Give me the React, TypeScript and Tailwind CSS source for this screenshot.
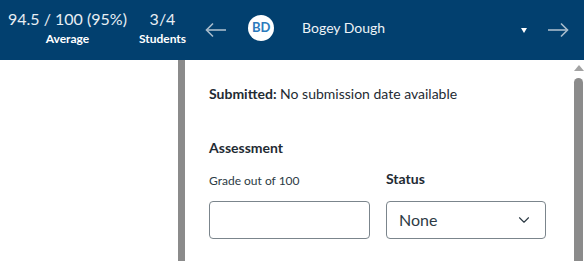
import { ChevronDown } from 'lucide-react';

function ArrowLeft() {
  return (
    <svg width="22" height="16" viewBox="0 0 22 16" fill="none" stroke="currentColor" strokeWidth="1.6">
      <path d="M21 8H2" />
      <path d="M8 1.5L1.5 8L8 14.5" />
    </svg>
  );
}

function ArrowRight() {
  return (
    <svg width="22" height="16" viewBox="0 0 22 16" fill="none" stroke="currentColor" strokeWidth="1.6">
      <path d="M1 8H20" />
      <path d="M14 1.5L20.5 8L14 14.5" />
    </svg>
  );
}

export default function App() {
  return (
    <div className="w-[584px] h-[261px] overflow-hidden bg-white font-['Lato','Open_Sans',sans-serif] text-[#2d3b45]">
      {/* HEADER */}
      <div className="h-[60px] bg-[#02406f] flex items-start text-white">
        <div className="ml-[8px] mt-[9px] flex flex-col items-center">
          <div className="text-[16px] leading-[20px] text-[#e8eef3]">94.5 / 100 (95%)</div>
          <div className="text-[12px] leading-[14px] font-bold mt-[3px]">Average</div>
        </div>
        <div className="ml-[12px] mt-[9px] flex flex-col items-center">
          <div className="text-[16px] leading-[20px] text-[#e8eef3]">3/4</div>
          <div className="text-[12px] leading-[14px] font-bold mt-[3px]">Students</div>
        </div>
        <button className="ml-[19px] mt-[22px] text-[#a9bccc]">
          <ArrowLeft />
        </button>
        <div className="ml-[21px] mt-[15px] w-[26px] h-[26px] rounded-full bg-white flex items-center justify-center text-[13px] font-bold text-[#2b7abc]">
          BD
        </div>
        <div className="ml-[28px] mt-[18px] text-[14px] leading-[20px] text-[#eef3f7]">Bogey Dough</div>
        <div className="ml-auto mt-[28px] w-0 h-0 border-l-[3.5px] border-r-[3.5px] border-t-[5px] border-l-transparent border-r-transparent border-t-white" />
        <button className="ml-[20px] mr-[15px] mt-[22px] text-[#a9bccc]">
          <ArrowRight />
        </button>
      </div>

      {/* BODY */}
      <div className="flex h-[201px]">
        <div className="w-[178px] bg-white" />
        <div className="w-[7px] bg-[#8b8b8b]" />
        <div className="flex-1 flex">
          <div className="flex-1 pl-[24px] pt-[24px]">
            <div className="text-[14px] leading-[20px] text-[#1f2b33]">
              <span className="font-bold">Submitted:</span> No submission date available
            </div>
            <div className="mt-[34px] text-[14px] leading-[20px] font-bold text-[#1f2b33]">Assessment</div>
            <div className="mt-[11px] flex gap-[16px]">
              <div className="w-[161px] flex flex-col">
                <div className="h-[20px] flex items-end text-[12px] leading-[16px] text-[#2d3b45]">Grade out of 100</div>
                <input className="mt-[12px] h-[38px] border border-[#7b858c] rounded-[4px] bg-white outline-none" />
              </div>
              <div className="w-[160px] flex flex-col">
                <div className="h-[20px] flex items-end text-[14px] leading-[20px] font-bold text-[#1f2b33]">Status</div>
                <div className="mt-[12px] h-[38px] border border-[#7b858c] rounded-[4px] bg-white flex items-center justify-between pl-[12px] pr-[12px]">
                  <span className="text-[16px] text-[#2d3b45]">None</span>
                  <ChevronDown className="w-[18px] h-[18px] text-[#2d3b45]" strokeWidth={1.5} />
                </div>
              </div>
            </div>
          </div>
          {/* scrollbar */}
          <div className="w-[11px] flex flex-col items-center pt-[5px]">
            <div className="w-0 h-0 border-l-[5px] border-r-[5px] border-b-[6px] border-l-transparent border-r-transparent border-b-[#a3a3a3]" />
            <div className="mt-[7px] w-[9px] flex-1 rounded-t-full bg-[#8b8b8b]" />
          </div>
        </div>
      </div>
    </div>
  );
}
